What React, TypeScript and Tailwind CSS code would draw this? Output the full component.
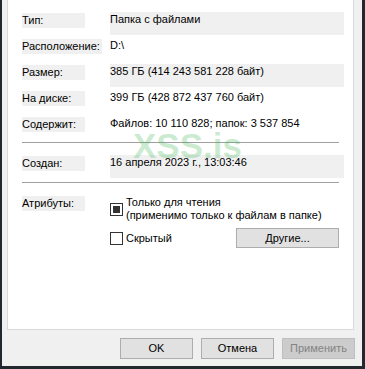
const font = { fontFamily: '"Liberation Sans", Arial, sans-serif' };

function Label({ text }: { text: string }) {
  return (
    <div className="w-[88px] shrink-0">
      <span className="inline-block min-w-[63px] h-[15px] bg-[#f0f0f0] leading-[15px] pr-[2px]">{text}</span>
    </div>
  );
}

function Row({ label, value, shaded }: { label: string; value: string; shaded?: boolean }) {
  return (
    <div className="flex h-[26px]">
      <Label text={label} />
      <div className={shaded ? 'w-[234px] h-[23px] bg-[#f0f0f0] leading-[15px]' : 'leading-[15px]'}>{value}</div>
    </div>
  );
}

function Checkbox({ checked }: { checked?: boolean }) {
  return (
    <div className="w-[13px] h-[13px] border border-[#333333] bg-white flex items-center justify-center shrink-0">
      {checked && <div className="w-[7px] h-[7px] bg-[#333333]" />}
    </div>
  );
}

function Button({ children, disabled }: { children: string; disabled?: boolean }) {
  return (
    <div
      className={
        disabled
          ? 'w-[73px] h-[21px] border border-[#bfbfbf] bg-[#cccccc] text-[#838383] flex items-center justify-center'
          : 'w-[73px] h-[21px] border border-[#adadad] bg-[#e1e1e1] flex items-center justify-center'
      }
    >
      {children}
    </div>
  );
}

export default function App() {
  return (
    <div
      className="relative w-[365px] h-[369px] bg-[#f0f0f0] border-l-2 border-r-[3px] border-b-[3px] border-[#23272e] text-[11px] text-black overflow-hidden"
      style={font}
    >
      {/* Tab page */}
      <div className="ml-[5px] mr-[8px] h-[330px] bg-white border-x border-b border-[#d9d9d9] pt-[12px] pl-[14px]">
        <Row label="Тип:" value="Папка с файлами" shaded />
        <Row label="Расположение:" value="D:\" />
        <Row label="Размер:" value="385 ГБ (414 243 581 228 байт)" shaded />
        <Row label="На диске:" value="399 ГБ (428 872 437 760 байт)" />
        <Row label="Содержит:" value="Файлов: 10 110 828; папок: 3 537 854" />

        <div className="w-[317px] h-px bg-[#a0a0a0]" />

        <div className="flex h-[27px] mt-[12px]">
          <Label text="Создан:" />
          <div className="w-[234px] h-[23px] bg-[#f0f0f0] leading-[15px]">16 апреля 2023 г., 13:03:46</div>
        </div>

        <div className="w-[317px] h-px bg-[#a0a0a0]" />

        <div className="flex mt-[12px]">
          <Label text="Атрибуты:" />
          <div className="flex flex-col">
            <div className="flex items-center gap-[3px] pt-px">
              <Checkbox checked />
              <div className="leading-[13px]">
                <div>Только для чтения</div>
                <div>(применимо только к файлам в папке)</div>
              </div>
            </div>
            <div className="flex items-center mt-[6px] h-[20px]">
              <div className="flex items-center gap-[3px] w-[126px]">
                <Checkbox />
                <span>Скрытый</span>
              </div>
              <div className="w-[103px] h-[20px] border border-[#adadad] bg-[#e1e1e1] flex items-center justify-center">
                Другие...
              </div>
            </div>
          </div>
        </div>
      </div>

      {/* Dialog buttons */}
      <div className="flex justify-end gap-[8px] mt-[8px] pr-[7px]">
        <Button>OK</Button>
        <Button>Отмена</Button>
        <Button disabled>Применить</Button>
      </div>

      {/* Watermark */}
      <div className="pointer-events-none absolute left-[131px] top-[128px] text-[35px] font-bold leading-none text-[#2fb14a]/25">
        XSS.is
      </div>
    </div>
  );
}
